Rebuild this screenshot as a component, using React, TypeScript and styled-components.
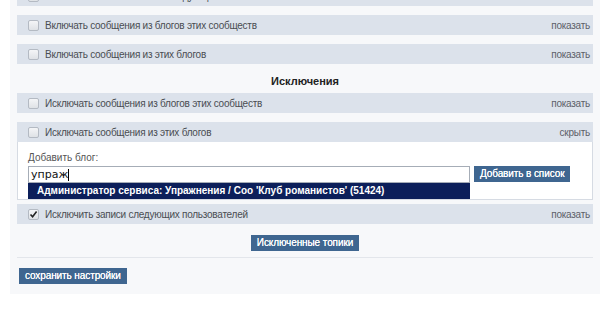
import React, { FC } from 'react';
import styled, { createGlobalStyle } from 'styled-components';

const GlobalStyle = createGlobalStyle`
  html, body {
    margin: 0;
    background: #fff;
    overflow: hidden;
  }
  body {
    font-family: "Liberation Sans", Arial, sans-serif;
  }
`;

const StyledPage = styled.div`
  width: 590px;
  margin: -14px 0 0 10px;
  padding: 0 7px 10px 7px;
  box-sizing: border-box;
  background: #f7f8fa;
  display: flex;
  flex-direction: column;
`;

const StyledBar = styled.div<{ open?: boolean }>`
  height: 20px;
  display: flex;
  align-items: center;
  justify-content: space-between;
  padding: 0 3px 0 11px;
  background: #dce2eb;
  color: #4a4d52;
  font-family: "Liberation Sans", Arial, sans-serif;
  font-size: 10px;
  letter-spacing: -0.25px;
  margin-bottom: ${({ open }) => (open ? '0' : '9px')};
  a {
    color: #5c6068;
    text-decoration: none;
  }
`;

const StyledLabel = styled.label`
  display: flex;
  align-items: center;
  gap: 6px;
`;

const StyledBox = styled.span<{ checked?: boolean }>`
  width: 11px;
  height: 11px;
  box-sizing: border-box;
  border: 1px solid #b4bac3;
  border-radius: 2px;
  background: linear-gradient(#f4f5f7, #dfe2e6);
  display: flex;
  align-items: center;
  justify-content: center;
  svg {
    display: ${({ checked }) => (checked ? 'block' : 'none')};
  }
`;

const StyledHeading = styled.div`
  text-align: center;
  font-family: "Liberation Sans", Arial, sans-serif;
  font-weight: bold;
  font-size: 11px;
  color: #222;
  height: 20px;
  line-height: 16px;
`;

const StyledPanel = styled.div`
  background: #fff;
  border: 1px solid #d6dbe3;
  border-top: 0;
  padding: 10px 10px 16px 10px;
  margin-bottom: 4px;
  font-family: "Liberation Sans", Arial, sans-serif;
  font-size: 10px;
  color: #555;
`;

const StyledField = styled.div`
  margin-top: 3px;
  display: flex;
  align-items: center;
  gap: 4px;
  position: relative;
`;

const StyledInput = styled.div`
  width: 442px;
  flex-shrink: 0;
  height: 17px;
  box-sizing: border-box;
  border: 1px solid #a6adb7;
  padding: 0 2px;
  font-family: Verdana, "DejaVu Sans", sans-serif;
  font-size: 11px;
  line-height: 15px;
  color: #111;
  display: flex;
  align-items: center;
  span {
    width: 1px;
    height: 12px;
    background: #000;
  }
`;

const StyledDropdown = styled.div`
  position: absolute;
  top: 17px;
  left: 0;
  width: 442px;
  height: 16px;
  box-sizing: border-box;
  padding-left: 9px;
  background: #0c1f5a;
  color: #fff;
  font-family: "Liberation Sans", Arial, sans-serif;
  font-size: 10px;
  font-weight: bold;
  line-height: 16px;
  white-space: nowrap;
`;

const StyledButton = styled.button<{ center?: boolean; shift?: number }>`
  height: 16px;
  padding: 0 6px;
  margin-left: ${({ shift }) => shift || 0}px;
  border: 0;
  background: #3f6690;
  color: #fff;
  font-family: "Liberation Sans", Arial, sans-serif;
  font-size: 10px;
  letter-spacing: -0.1px;
  line-height: 16px;
  white-space: nowrap;
  flex-shrink: 0;
  cursor: pointer;
  text-shadow: 0 0 0.4px #fff;
  align-self: ${({ center }) => (center ? 'center' : 'flex-start')};
`;

const StyledCentered = styled(StyledButton)`
  margin-top: 2px;
`;

const StyledRule = styled.hr`
  width: 100%;
  height: 1px;
  border: 0;
  background: #e3e6eb;
  margin: 6px 0 10px 0;
`;

const Check: FC = () => (
  <svg width="9" height="9" viewBox="0 0 9 9">
    <path d="M1.5 4.5 L3.6 6.8 L7.6 1.6" fill="none" stroke="#222" strokeWidth="1.6" />
  </svg>
);

interface IRowProps {
  text: string;
  action: string;
  checked?: boolean;
  open?: boolean;
}

const Row: FC<IRowProps> = ({ text, action, checked, open }) => (
  <StyledBar open={open}>
    <StyledLabel>
      <StyledBox checked={checked}>
        <Check />
      </StyledBox>
      {text}
    </StyledLabel>
    <a href="#">{action}</a>
  </StyledBar>
);

const App: FC = () => (
  <>
    <GlobalStyle />
    <StyledPage>
      <Row text="Включать записи из блогов следующих пользователей" action="показать" />
      <Row text="Включать сообщения из блогов этих сообществ" action="показать" />
      <Row text="Включать сообщения из этих блогов" action="показать" />
      <StyledHeading>Исключения</StyledHeading>
      <Row text="Исключать сообщения из блогов этих сообществ" action="показать" />
      <Row text="Исключать сообщения из этих блогов" action="скрыть" open />
      <StyledPanel>
        <div>Добавить блог:</div>
        <StyledField>
          <StyledInput>
            упраж<span />
          </StyledInput>
          <StyledButton>Добавить в список</StyledButton>
          <StyledDropdown>
            Администратор сервиса: Упражнения / Соо 'Клуб романистов' (51424)
          </StyledDropdown>
        </StyledField>
      </StyledPanel>
      <Row text="Исключить записи следующих пользователей" action="показать" checked />
      <StyledCentered center>Исключенные топики</StyledCentered>
      <StyledRule />
      <StyledButton shift={2}>сохранить настройки</StyledButton>
    </StyledPage>
  </>
);

export default App;
